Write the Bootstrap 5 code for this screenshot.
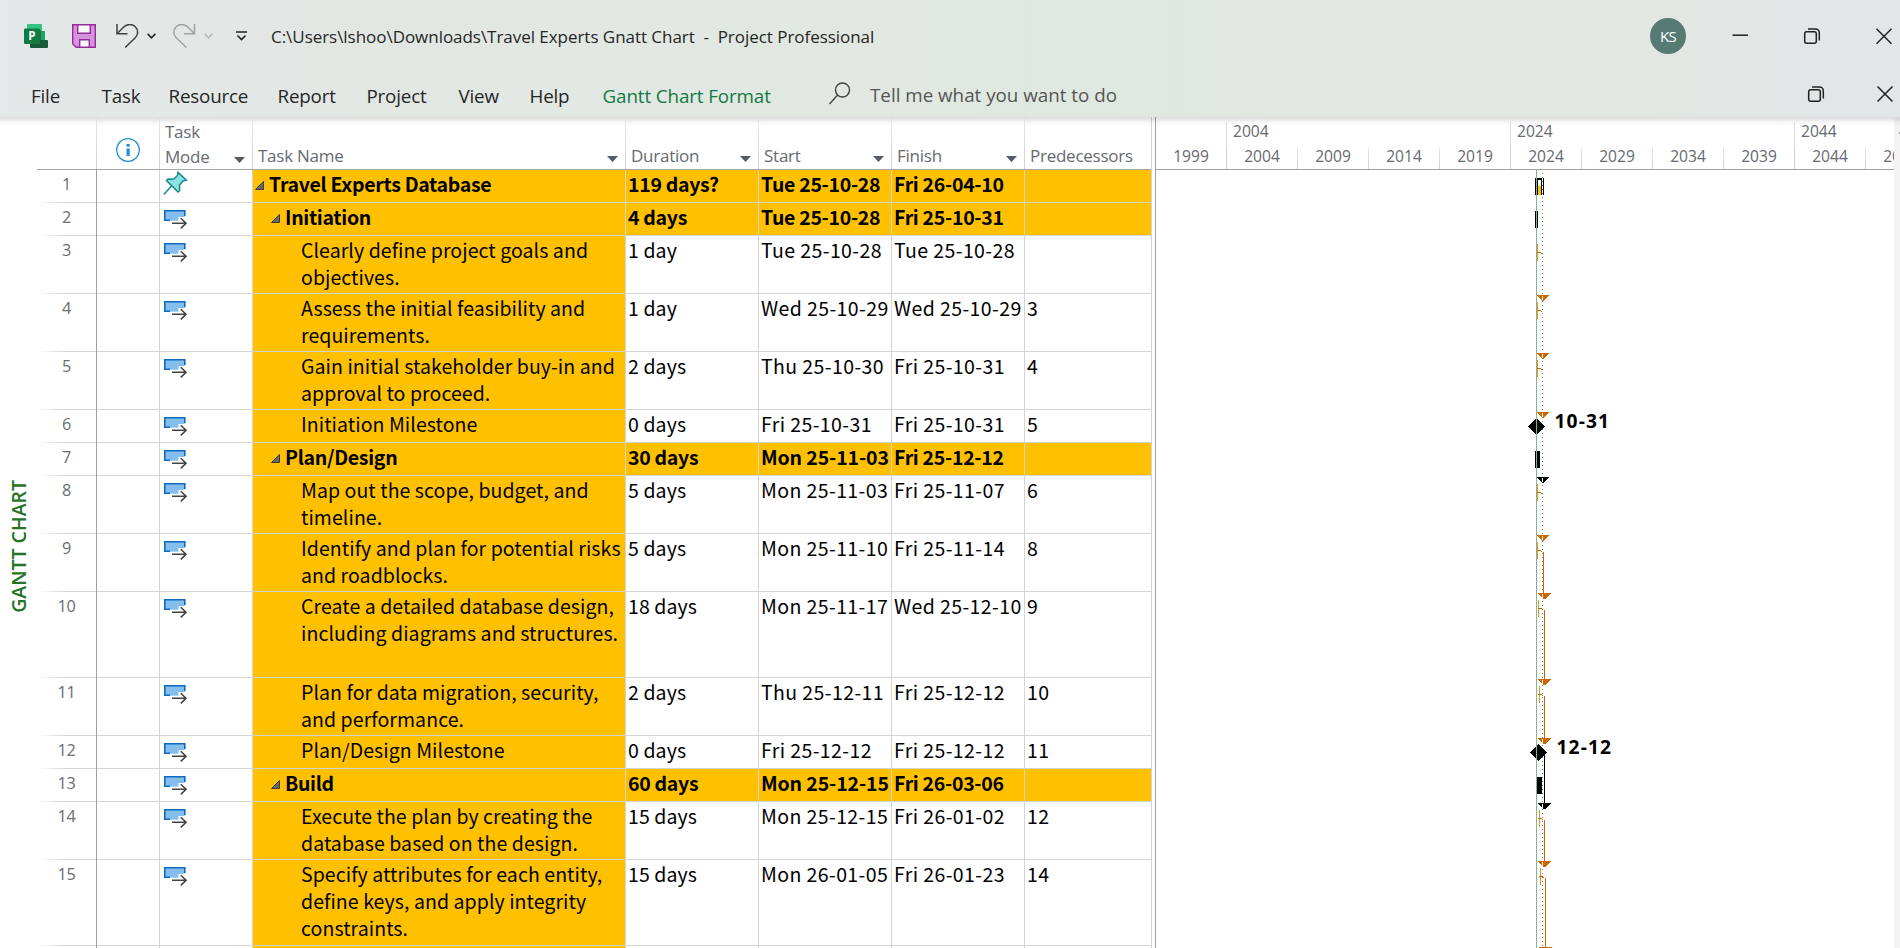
<!DOCTYPE html>
<html lang="en">
<head>
<meta charset="utf-8">
<title>Travel Experts Gnatt Chart - Project Professional</title>
<link rel="stylesheet" href="https://cdn.jsdelivr.net/npm/bootstrap@5.3.0/dist/css/bootstrap.min.css">
<style>
body{width:1900px;height:948px;overflow:hidden;background:#fff;font-family:"Open Sans",sans-serif;color:#262626}
.app-head{height:117px;background:linear-gradient(90deg,#e4e8e8 0,#e2e7e4 350px,#e1e8e2 800px,#dfe9e0 1140px,#e2e7e3 1330px,#e2e7e3 1640px,#e2e6e6 1800px)}
.title-row{height:72px;display:grid;grid-template-columns:24px 48px 44px 31px 26px 31px 32px 35px 1379px 73px 72px 105px;align-items:center}
.title-text{font-size:17px;letter-spacing:-.04px;white-space:pre;line-height:24px;padding-top:1px}
.menu-row{height:45px;display:grid;grid-template-columns:31px 70.5px 67px 109px 89px 92px 71px 73px 226.5px 41px 935px 1fr;align-items:center;font-size:18.8px;white-space:nowrap;letter-spacing:-.18px;line-height:26px;padding-top:2px}
.menu-row span{height:26px}
.menu-row svg{margin-top:-4px}
.menu-row .tell{color:#555;letter-spacing:0;margin-top:-2px}
.fmt-tab{color:#137a43;letter-spacing:-.1px}
.avatar{width:36px;height:36px;background:#567b72;color:#fff;font-size:15px;letter-spacing:-.6px}
.body-row{height:831px}
.head-shade{height:9px;background:linear-gradient(rgba(0,0,0,.14),rgba(0,0,0,.03) 60%,transparent);left:0;right:0;top:0;z-index:3}
.view-bar{width:37px;height:831px}
.view-bar span{display:block;writing-mode:vertical-rl;transform:rotate(180deg);font-weight:600;font-size:19.5px;color:#267326;line-height:30px;margin:363px 0 0 4px;width:30px}
.sheet{width:1115px;border-right:1px solid #d4d4d4}
.g-row{display:grid;grid-template-columns:60px 63px 93px 373px 133px 133px 133px 126px}
.g-head{height:53px;border-bottom:1px solid #a6a6a6;font-size:17px;letter-spacing:-.25px;color:#666a70;line-height:25px}
.g-head>div{display:flex;align-items:flex-end;justify-content:space-between;padding:0 7px 1px 5px;white-space:nowrap;border-right:1px solid;border-image:linear-gradient(#fff,#e4e4e4 20%,#d0d0d0) 1}
.g-head>div:last-child{border-right:0}
.g-head svg{margin-bottom:6px}
.g-body{font-family:"Noto Sans CJK SC",sans-serif;font-size:19.5px;line-height:27px;color:#000}
.g-body .g-row>div{border-right:1px solid #d4d4d4;border-bottom:1px solid #d4d4d4;white-space:nowrap;padding-left:2px;letter-spacing:.4px}
.g-body .g-row>div:last-child{border-right:0}
.g-body .g-row>.num{font-family:"Open Sans",sans-serif;font-size:16.3px;letter-spacing:-.2px;color:#6a6d70;text-align:center;padding:1px 0 0;border-bottom:0;border-right-color:#a0a0a0;background:linear-gradient(90deg,#fff,#d4d4d4 45%) bottom/100% 1px no-repeat}
.g-body .g-row>.name{background:#ffc000;letter-spacing:.07px}
.g-body .g-row>.dur{letter-spacing:.1px;padding-left:2px}
.g-body .g-row>.icon-cell{padding:0 0 0 3px;line-height:0}
.summary>div:nth-child(n+5){background:#ffc000}
.g-body .summary>div:nth-child(n+4){font-weight:700;letter-spacing:-.3px}
.g-body .summary>div.mon{letter-spacing:-.12px}
.g-body .summary>.name{letter-spacing:-.53px}
.g-body .summary>.dur{letter-spacing:-.6px}
.lv0{padding-left:2px!important}.lv1{padding-left:18px!important}.lv2{padding-left:48px!important}
.tri{margin-right:5px;vertical-align:2px}
.gap-bar{width:4px;border-right:1px solid #a0a0a0}
.chart{width:738px;overflow:hidden}
.t-head{height:53px;border-bottom:1px solid #a0a0a0;font-size:15.6px;color:#666a70}
.t-major,.t-minor{display:grid;white-space:nowrap}
.t-major{grid-template-columns:70px 284px 284px 284px;height:31px;padding-top:5px;line-height:18px}
.t-minor{grid-template-columns:70px repeat(10,71px);height:21px;line-height:16.5px;text-align:center}
.t-major>div+div{border-left:1px solid #dcdcdc;padding-left:6px}
.t-minor>div+div{border-left:1px solid;border-image:linear-gradient(#e8e8e8,#cfcfcf) 1}
.t-major>div{height:26px}
.t-minor>div.maj{border-image:none;border-color:#d0d0d0}
.edge{width:6px;background:#f3f3f3;border-top-left-radius:5px;padding:15px 0 0 5px}
.edge i{display:block;height:2px;background:#999}
</style>
</head>
<body>
<header class="app-head">
 <div class="title-row">
  <span></span>
  <svg width="24" height="24" viewBox="0 0 24 24"><path d="M4 0h13a1 1 0 0 1 1 1v7H3V1a1 1 0 0 1 1-1z" fill="#33c481"/><path d="M9 7h12v10H9z" fill="#21a366"/><path d="M6 16h17a1 1 0 0 1 1 1v6a1 1 0 0 1-1 1H7a1 1 0 0 1-1-1z" fill="#185c37"/><path d="M8 6h9v13H8z" fill="#0b5a31" opacity=".6"/><rect y="4.5" width="16" height="15.5" rx="1.2" fill="#107c41"/><text x="4.2" y="16.3" font-size="11.5" font-weight="700" fill="#fff">P</text></svg>
  <svg width="24" height="24" viewBox="0 0 24 24"><path d="M.7.7h22.6v22.6H4.2L.7 20z" fill="#d692dc" stroke="#952b9d" stroke-width="1.4"/><path d="M5.7.7h12.6v8.6H5.7zM7.700 23.300v-7.600h9.600v7.600z" fill="#fafafa" stroke="#952b9d" stroke-width="1.400"/></svg>
  <svg width="24" height="24" viewBox="0 0 24 24" fill="none" stroke="#404040" stroke-width="1.5"><path d="M1 0v9.700h10.500M1.200 9.500L7.500 3.200C11-.3 16-.3 19.300 2.700c3.200 3.200 3 8 0 11L9.200 23.500"/></svg>
  <svg width="9" height="6" viewBox="0 0 9 6" fill="none" stroke="#222" stroke-width="1.600"><path d="M.6.800l3.900 4 3.900-4"/></svg>
  <svg width="24" height="24" viewBox="0 0 24 24" fill="none" stroke="#a0a3a3" stroke-width="1.500"><path d="M21.500 0v9.700H11M21.300 9.500L15 3.200C11.500-.3 6.500-.3 3.200 2.700c-3.200 3.200-3 8 0 11l10.100 9.800"/></svg>
  <svg width="9" height="6" viewBox="0 0 9 6" fill="none" stroke="#b6b9b9" stroke-width="1.600"><path d="M.6.800l3.900 4 3.900-4"/></svg>
  <svg width="11" height="10" viewBox="0 0 11 10" fill="none" stroke="#222" stroke-width="1.600"><path d="M0 1h11M1.500 4.500l4 4 4-4"/></svg>
  <div class="title-text">C:\Users\lshoo\Downloads\Travel Experts Gnatt Chart  -  Project Professional</div>
 </div>
 <div class="menu-row">
  <span></span><span>File</span><span>Task</span><span>Resource</span><span>Report</span><span>Project</span><span>View</span><span>Help</span><span class="fmt-tab">Gantt Chart Format</span>
  <svg width="22" height="23" viewBox="0 0 22 23" fill="none" stroke="#444" stroke-width="1.400"><circle cx="13.500" cy="8" r="7"/><path d="M8.600 13L.5 22"/></svg>
  <span class="tell">Tell me what you want to do</span>
 </div>
</header>
<main class="body-row d-flex position-relative">
 <div class="head-shade position-absolute"></div>
 <div class="view-bar"><span>GANTT CHART</span></div>
 <section class="sheet">
  <div class="g-row g-head" id="gh"></div>
  <div class="g-body" id="gb"></div>
 </section>
 <div class="gap-bar"></div>
 <section class="chart">
  <div class="t-head"><div class="t-major"><div></div><div>2004</div><div>2024</div><div>2044</div></div>
  <div class="t-minor"><div>1999</div><div class="maj">2004</div><div>2009</div><div>2014</div><div>2019</div><div class="maj">2024</div><div>2029</div><div>2034</div><div>2039</div><div class="maj">2044</div><div>2049</div></div></div>
  <svg id="bars" class="d-block" width="738" height="778" viewBox="1156 170 738 778" shape-rendering="crispEdges"></svg>
 </section>
 <div class="edge"><i></i></div>
</main>
<div class="position-absolute" style="left:1650px;top:18px"><div class="avatar rounded-circle d-flex align-items-center justify-content-center">KS</div></div>
<svg class="position-absolute" style="left:1720px;top:20px" width="180" height="90" viewBox="1720 20 180 90" fill="none" stroke="#222" stroke-width="1.500">
 <path d="M1732.500 35.200h15.500"/>
 <g id="rs"><rect x="1804.700" y="31.700" width="11.600" height="11.600" rx="2"/><path d="M1808 28.900h7.500a3.800 3.800 0 0 1 3.800 3.800v7.800"/></g>
 <path d="M1876.500 28.700l15 15m0-15l-15 15M1877.500 86.500l15 15m0-15l-15 15"/><use href="#rs" x="4" y="58"/></svg>
<script>
const caret='<svg width="11" height="6" viewBox="0 0 11 6"><path d="M0 0h11L5.500 6z" fill="#555b63"/></svg>';
const info='<svg width="24" height="24" viewBox="0 0 24 24" style="margin:0 0 6px 19px"><circle cx="12" cy="12" r="11.300" fill="#fff" stroke="#1e8fd4" stroke-width="1.300"/><path d="M10.500 6h3.200v2.700h-3.200zM10.500 10.500h3.200v7.500h-3.200z" fill="#1e8fd4"/></svg>';
document.getElementById('gh').innerHTML='<div></div><div style="padding:0 0 1px">'+info+'</div><div style="padding-bottom:0"><span>Task<br>Mode</span>'+caret+'</div>'+['Task Name','Duration','Start','Finish'].map(t=>'<div><span>'+t+'</span>'+caret+'</div>').join('')+'<div><span>Predecessors</span></div>';
const auto='<svg width="25" height="20" viewBox="0 0 25 20" style="margin-top:6px"><path d="M1.800 1.700h20v10h-20z" fill="#83beec"/><path d="M15.500 8h8v6h-8zM8 12h9v3H8z" fill="#fff"/><path d="M7 11.200H1.800v-9.500h20v5.300" fill="none" stroke="#0f6cbd" stroke-width="1.600"/><path d="M9 14.300h14M17.800 9.200l5.200 5.100-5.200 5.100" fill="none" stroke="#444" stroke-width="1.600"/></svg>';
const pin='<svg width="25" height="25" viewBox="0 0 25 25" style="margin-top:1px"><path d="M15 1.200l8.300 8-3.300.8-3.500 4 .2 5.500-1.700 1.500L3.500 9.500 5 8l5.500.2 4-3.700z" fill="#8be3df" stroke="#16898c" stroke-width="1.500"/><path d="M8.500 15L.8 23.500" stroke="#16898c" stroke-width="1.500"/></svg>';
const tri='<svg class="tri" width="9" height="9" viewBox="0 0 9 9"><path d="M8.500.5v8H.5z" fill="#666" stroke="#333" stroke-width=".9"/></svg>';
// height, outline level, name, duration, start, finish, predecessors
const rows=[[33,0,'Travel Experts Database','119 days?','Tue 25-10-28','Fri 26-04-10',''],
[33,1,'Initiation','4 days','Tue 25-10-28','Fri 25-10-31',''],
[58,2,'Clearly define project goals and<br>objectives.','1 day','Tue 25-10-28','Tue 25-10-28',''],
[58,2,'Assess the initial feasibility and<br>requirements.','1 day','Wed 25-10-29','Wed 25-10-29','3'],
[58,2,'Gain initial stakeholder buy-in and<br>approval to proceed.','2 days','Thu 25-10-30','Fri 25-10-31','4'],
[33,2,'Initiation Milestone','0 days','Fri 25-10-31','Fri 25-10-31','5'],
[33,1,'Plan/Design','30 days','Mon 25-11-03','Fri 25-12-12',''],
[58,2,'Map out the scope, budget, and<br>timeline.','5 days','Mon 25-11-03','Fri 25-11-07','6'],
[58,2,'Identify and plan for potential risks<br>and roadblocks.','5 days','Mon 25-11-10','Fri 25-11-14','8'],
[86,2,'Create a detailed database design,<br>including diagrams and structures.','18 days','Mon 25-11-17','Wed 25-12-10','9'],
[58,2,'Plan for data migration, security,<br>and performance.','2 days','Thu 25-12-11','Fri 25-12-12','10'],
[33,2,'Plan/Design Milestone','0 days','Fri 25-12-12','Fri 25-12-12','11'],
[33,1,'Build','60 days','Mon 25-12-15','Fri 26-03-06',''],
[58,2,'Execute the plan by creating the<br>database based on the design.','15 days','Mon 25-12-15','Fri 26-01-02','12'],
[86,2,'Specify attributes for each entity,<br>define keys, and apply integrity<br>constraints.','15 days','Mon 26-01-05','Fri 26-01-23','14'],
[33,2,'','','','','']];
document.getElementById('gb').innerHTML=rows.map((r,i)=>`<div class="g-row${r[1]<2?' summary':''}" style="height:${r[0]}px"><div class="num">${r[2]?i+1:''}</div><div></div><div class="icon-cell">${!r[2]?'':i?auto:pin}</div><div class="name lv${r[1]}">${r[1]<2?tri:''}${r[2]}</div><div class="dur">${r[3]}</div><div${r[4][0]=='M'?' class="mon"':''}>${r[4]}</div><div>${r[5]}</div><div>${r[6]}</div></div>`).join('');
const O='#cc6600',L='#e69138',K='#000';let s='';
const box=(x,y,w,h,c)=>s+=`<rect x="${x}" y="${y}" width="${w}" height="${h}" fill="${c}"/>`;
for(let y=173;y<948;y+=4)box(1542,y,1,1,'#777');
const head=(x,y,c)=>{for(let k=0;k<6;k++)box(x+k,y+k,12-2*k+(x>1537?1:0),1,c);box(1542,y+1,1,4,'#fff')};
const task=(x,y)=>{box(x,y,1,17,L);box(x>1538?x-1:x,y+8,4,1,O);box(x>1538?x+3:x+4,y+9,1,1,O)};
const link=(x,y,y2,c)=>box(x,y,1,y2-y,c);
const dia=(x,y)=>s+=`<path d="M${x-8.5} ${y}L${x} ${y-8.5}L${x+8.5} ${y}L${x} ${y+8.5}z"/>`;
box(1535,178,1,17,K);box(1537,178,5,2,K);box(1537,178,1,17,K);box(1538,186,3,9,'#ffc000');box(1541,178,1,17,K);box(1543,178,1,17,K);
box(1535,211,3,17,K);
[[1537,244],[1537,302],[1537,360],[1537,484],[1537,542],[1538,600],[1539,686],[1539,810],[1540,868]].forEach(a=>task(...a));
link(1543,552,594,O);link(1544,610,680,O);link(1544,696,739,O);link(1544,750,804,K);link(1544,820,862,O);link(1545,878,948,O);
[[1537,295,O],[1537,353,O],[1537,412,O],[1537,477,K],[1537,535,O],[1538,593,O],[1538,679,O],[1538,738,O],[1538,803,K],[1538,861,O]].forEach(a=>head(...a));
box(1539,947,13,1,O);
dia(1536.5,426.5);dia(1538.5,752.5);box(1535,451,5,17,K);box(1537,777,5,17,K);
box(1536,170,1,778,'#83b883');
s+='<g font-size="19.200" font-weight="700" letter-spacing="1.100"><text x="1554.500" y="427.700">10-31</text><text x="1556.500" y="753.700">12-12</text></g>';
document.getElementById('bars').innerHTML=s;
</script>
<script src="https://cdn.jsdelivr.net/npm/bootstrap@5.3.0/dist/js/bootstrap.bundle.min.js"></script>
</body>
</html>
